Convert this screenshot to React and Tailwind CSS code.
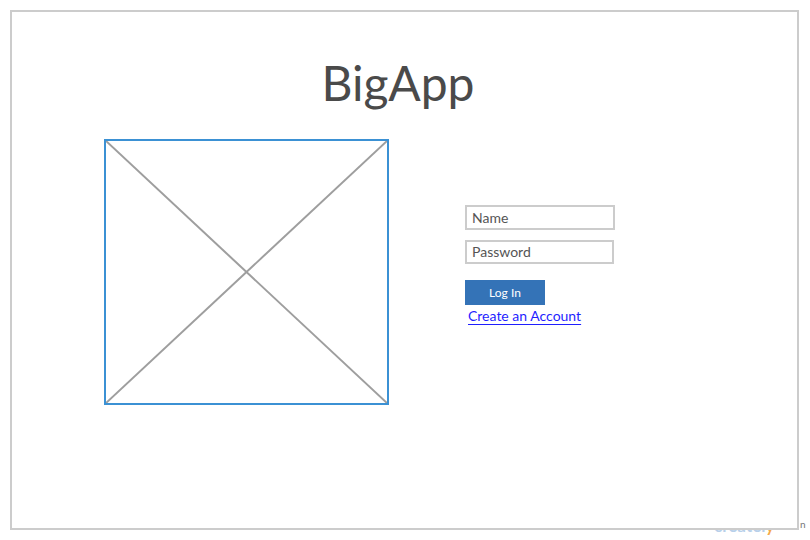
export default function App() {
  return (
    <div className="w-[810px] h-[540px] bg-white relative overflow-hidden pt-[10px] pl-[10px] font-['Lato','Liberation_Sans',sans-serif]">
      <div className="w-[789px] h-[520px] border-2 border-[#cccccc] box-border bg-white relative z-10">
        <h1 className="pt-[47px] pr-[13px] text-center text-[48px] leading-none text-[#4a4a4a] font-normal">
          BigApp
        </h1>
        <div className="flex mt-[32px]">
          <div className="ml-[92px] w-[285px] h-[266px] border-2 border-[#3b91d4] box-border relative">
            <svg className="absolute inset-0" width="281" height="262" viewBox="0 0 281 262">
              <line x1="0" y1="0" x2="281" y2="262" stroke="#9e9e9e" strokeWidth="2" />
              <line x1="281" y1="0" x2="0" y2="262" stroke="#9e9e9e" strokeWidth="2" />
            </svg>
          </div>
          <div className="ml-[76px] mt-[66px] flex flex-col items-start">
            <div className="w-[150px] h-[25px] border-2 border-[#cccccc] box-border pl-[5px] text-[14px] leading-[21px] text-[#555555]">
              Name
            </div>
            <div className="mt-[10px] w-[149px] h-[24px] border-2 border-[#cccccc] box-border pl-[5px] text-[14px] leading-[20px] text-[#555555]">
              Password
            </div>
            <div className="mt-[16px] w-[80px] h-[25px] bg-[#3473b7] text-white text-[12px] leading-[25px] text-center">
              Log In
            </div>
            <div className="mt-[2px] ml-[3px] text-[14px] leading-[17px] text-[#1f1fff] underline underline-offset-[3px]">
              Create an Account
            </div>
          </div>
        </div>
      </div>
      <div className="absolute left-[714px] top-[517px] text-[17px] leading-none font-bold text-[#b8d0ea]">
        {"createl"}
        <span className="text-[#f5a94a]">y</span>
      </div>
      <div className="absolute left-[800px] top-[519px] text-[10px] leading-none text-[#777777]">n</div>
    </div>
  );
}
